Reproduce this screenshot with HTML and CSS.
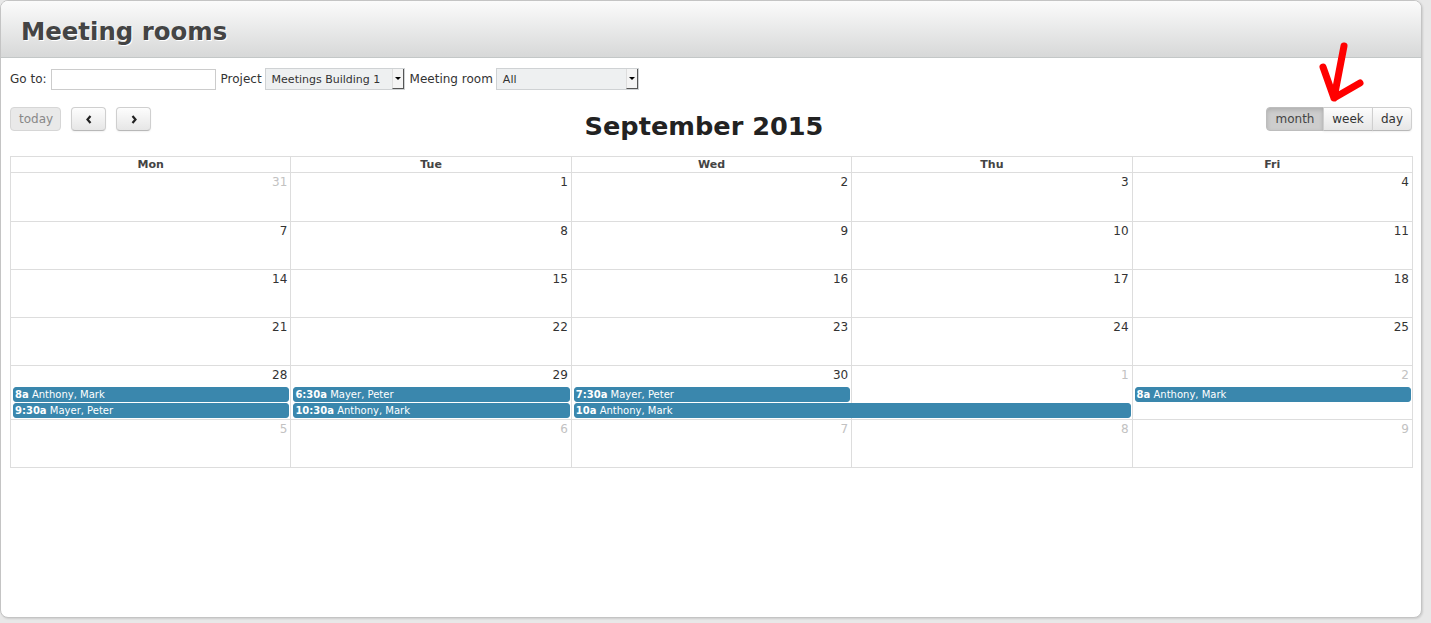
FILE: index.html
```html
<!DOCTYPE html>
<html>
<head>
<meta charset="utf-8">
<title>Meeting rooms</title>
<link rel="stylesheet" href="styles.css">
</head>
<body>
<div class="panel">
  <div class="panel-head"><h1>Meeting rooms</h1></div>
  <div class="panel-body">
    <div class="filters">
      <label>Go to:</label>
      <input class="goto" type="text">
      <label>Project</label>
      <div class="select project"><span>Meetings Building 1</span><i class="drop"></i></div>
      <label>Meeting room</label>
      <div class="select room"><span>All</span><i class="drop"></i></div>
    </div>

    <div class="cal-toolbar">
      <div class="tb-left">
        <button class="btn disabled">today</button>
        <button class="btn icon"><svg width="8" height="11" viewBox="0 0 8 11"><path d="M5.5 2 L2.5 5.5 L5.5 9" fill="none" stroke="#222" stroke-width="2.2"/></svg></button>
        <button class="btn icon"><svg width="8" height="11" viewBox="0 0 8 11"><path d="M2.5 2 L5.5 5.5 L2.5 9" fill="none" stroke="#222" stroke-width="2.2"/></svg></button>
      </div>
      <div class="tb-center"><h2>September 2015</h2></div>
      <div class="tb-right">
        <div class="btn-group">
          <button class="btn active">month</button>
          <button class="btn">week</button>
          <button class="btn">day</button>
        </div>
      </div>
    </div>

    <div class="cal">
      <div class="cal-head">
        <div>Mon</div><div>Tue</div><div>Wed</div><div>Thu</div><div>Fri</div>
      </div>

      <div class="week">
        <div class="day other"><span>31</span></div>
        <div class="day"><span>1</span></div>
        <div class="day"><span>2</span></div>
        <div class="day"><span>3</span></div>
        <div class="day"><span>4</span></div>
      </div>
      <div class="week">
        <div class="day"><span>7</span></div>
        <div class="day"><span>8</span></div>
        <div class="day"><span>9</span></div>
        <div class="day"><span>10</span></div>
        <div class="day"><span>11</span></div>
      </div>
      <div class="week">
        <div class="day"><span>14</span></div>
        <div class="day"><span>15</span></div>
        <div class="day"><span>16</span></div>
        <div class="day"><span>17</span></div>
        <div class="day"><span>18</span></div>
      </div>
      <div class="week">
        <div class="day"><span>21</span></div>
        <div class="day"><span>22</span></div>
        <div class="day"><span>23</span></div>
        <div class="day"><span>24</span></div>
        <div class="day"><span>25</span></div>
      </div>
      <div class="week">
        <div class="day"><span>28</span></div>
        <div class="day"><span>29</span></div>
        <div class="day"><span>30</span></div>
        <div class="day other"><span>1</span></div>
        <div class="day other"><span>2</span></div>
        <div class="ev c1 r1"><b>8a</b> Anthony, Mark</div>
        <div class="ev c1 r2"><b>9:30a</b> Mayer, Peter</div>
        <div class="ev c2 r1"><b>6:30a</b> Mayer, Peter</div>
        <div class="ev c2 r2"><b>10:30a</b> Anthony, Mark</div>
        <div class="ev c3 r1"><b>7:30a</b> Mayer, Peter</div>
        <div class="ev c3 r2 span2"><b>10a</b> Anthony, Mark</div>
        <div class="ev c5 r1"><b>8a</b> Anthony, Mark</div>
      </div>
      <div class="week">
        <div class="day other"><span>5</span></div>
        <div class="day other"><span>6</span></div>
        <div class="day other"><span>7</span></div>
        <div class="day other"><span>8</span></div>
        <div class="day other"><span>9</span></div>
      </div>
    </div>
  </div>

  <svg class="annot" width="60" height="70" viewBox="0 0 60 70">
    <path d="M27 6 L17 58 M6 27 L17 58 L43 43" fill="none" stroke="#ff0000" stroke-width="7" stroke-linecap="round" stroke-linejoin="round"/>
  </svg>
</div>
</body>
</html>
```

FILE: styles.css
```css
html, body {
  margin: 0;
  padding: 0;
}
body {
  background: #e8e8e8;
  font-family: "DejaVu Sans", Verdana, sans-serif;
  color: #333;
  font-size: 12px;
  height: 623px;
  overflow: hidden;
}
.panel {
  position: relative;
  width: 1422px;
  height: 618px;
  box-sizing: border-box;
  background: #fff;
  border: 1px solid #c4c4c4;
  border-radius: 8px;
  box-shadow: 1px 1px 2px rgba(0,0,0,0.12);
  overflow: hidden;
}
.panel-head {
  height: 56px;
  background: linear-gradient(#fbfbfb, #d7d8d8);
  border-bottom: 1px solid #c3c7c7;
  display: flex;
  align-items: center;
  padding-left: 20px;
}
.panel-head h1 {
  margin: 5px 0 0;
  font-size: 24.4px;
  font-weight: bold;
  color: #444;
  text-shadow: 1px 1px 0 #fff;
}
.panel-body {
  padding: 10px 9px 0 9px;
}
.filters {
  display: flex;
  align-items: center;
  height: 22px;
  gap: 4px;
}
.filters label {
  color: #333;
  font-size: 12px;
}
.filters .goto {
  width: 165px;
  height: 21px;
  box-sizing: border-box;
  border: 1px solid #ccc;
  margin: 0 1px 0 0;
  padding: 0;
}
.select {
  position: relative;
  height: 22px;
  box-sizing: border-box;
  border: 1px solid #cfd2d4;
  background: #eef0f1;
  font-size: 11px;
  color: #333;
  display: flex;
  align-items: center;
  padding-left: 6px;
}
.select.project { width: 140px; margin-left: -1px; margin-right: 1px; }
.select.room { width: 143px; margin-left: -1px; }
.select span { flex: 1; }
.select .drop {
  width: 12px;
  height: 20px;
  box-sizing: border-box;
  background: #f4f4f4;
  border-left: 1px solid #ddd;
  border-right: 1px solid #555;
  border-bottom: 1px solid #555;
  position: relative;
}
.select .drop::after {
  content: "";
  position: absolute;
  left: 2px;
  top: 8px;
  border-left: 3px solid transparent;
  border-right: 3px solid transparent;
  border-top: 3px solid #000;
}

.cal-toolbar {
  display: flex;
  align-items: flex-start;
  margin-top: 17px;
  height: 49px;
}
.tb-left, .tb-right {
  display: flex;
}
.tb-left .btn + .btn { margin-left: 10px; }
.tb-center {
  flex: 1;
  text-align: center;
  padding-right: 9px;
}
.tb-center h2 {
  margin: 4px 0 0;
  font-size: 25.6px;
  line-height: 30px;
  font-weight: bold;
  color: #222;
}
.btn {
  height: 24px;
  box-sizing: border-box;
  border: 1px solid #cfcfcf;
  border-bottom-color: #b8b8b8;
  border-radius: 4px;
  background: linear-gradient(#fdfdfd, #e6e6e6);
  font-family: "DejaVu Sans", Verdana, sans-serif;
  font-size: 12px;
  color: #333;
  padding: 0 8px;
  box-shadow: inset 0 1px 0 rgba(255,255,255,0.3), 0 1px 2px rgba(0,0,0,0.06);
  cursor: pointer;
}
.btn.disabled {
  width: 51px;
  color: #888;
  background: #e9e9e9;
  border-color: #d6d6d6;
  box-shadow: none;
}
.btn.icon {
  width: 35px;
  display: flex;
  align-items: center;
  justify-content: center;
}
.btn-group {
  display: flex;
}
.btn-group .btn {
  border-radius: 0;
  margin-left: -1px;
}
.btn-group .btn:first-child {
  border-radius: 4px 0 0 4px;
  margin-left: 0;
  width: 58px;
}
.btn-group .btn:nth-child(2) { width: 50px; }
.btn-group .btn:last-child {
  border-radius: 0 4px 4px 0;
  width: 40px;
}
.btn.active {
  background: #cdcdcd;
  border-color: #bdbdbd;
  box-shadow: inset 0 2px 4px rgba(0,0,0,0.15);
  color: #444;
}

.cal {
  border-left: 1px solid #ddd;
  border-top: 1px solid #ddd;
  box-sizing: border-box;
  width: 1403px;
}
.cal-head {
  display: grid;
  grid-template-columns: repeat(5, 1fr);
  border-bottom: 1px solid #ddd;
}
.cal-head div {
  border-right: 1px solid #ddd;
  text-align: center;
  font-size: 11px;
  font-weight: bold;
  color: #444;
  line-height: 15px;
}
.week {
  display: grid;
  grid-template-columns: repeat(5, 1fr);
  grid-template-rows: 21px auto auto minmax(0, 1fr);
  min-height: 47px;
  border-bottom: 1px solid #ddd;
}
.week:nth-child(2) { min-height: 48px; }
.day {
  grid-row: 1 / 5;
  border-right: 1px solid #ddd;
  text-align: right;
  padding: 1px 3px 0 0;
  font-size: 12px;
  line-height: 16px;
  color: #333;
}
.day:nth-child(1) { grid-column: 1; }
.day:nth-child(2) { grid-column: 2; }
.day:nth-child(3) { grid-column: 3; }
.day:nth-child(4) { grid-column: 4; }
.day:nth-child(5) { grid-column: 5; }
.day.other { color: #c2c2c2; }
.ev {
  height: 15px;
  box-sizing: border-box;
  margin: 0 2px 1px 2px;
  background: #3a87ad;
  border: 1px solid #3a87ad;
  border-radius: 3px;
  color: #fff;
  font-size: 10px;
  line-height: 13px;
  padding-left: 1px;
  white-space: nowrap;
  overflow: hidden;
}
.ev b { font-weight: bold; }
.ev.c1 { grid-column: 1; }
.ev.c2 { grid-column: 2; }
.ev.c3 { grid-column: 3; }
.ev.c5 { grid-column: 5; }
.ev.span2 { grid-column: 3 / span 2; }
.ev.r1 { grid-row: 2; }
.ev.r2 { grid-row: 3; }

.annot {
  position: absolute;
  left: 1316px;
  top: 39px;
}
```
